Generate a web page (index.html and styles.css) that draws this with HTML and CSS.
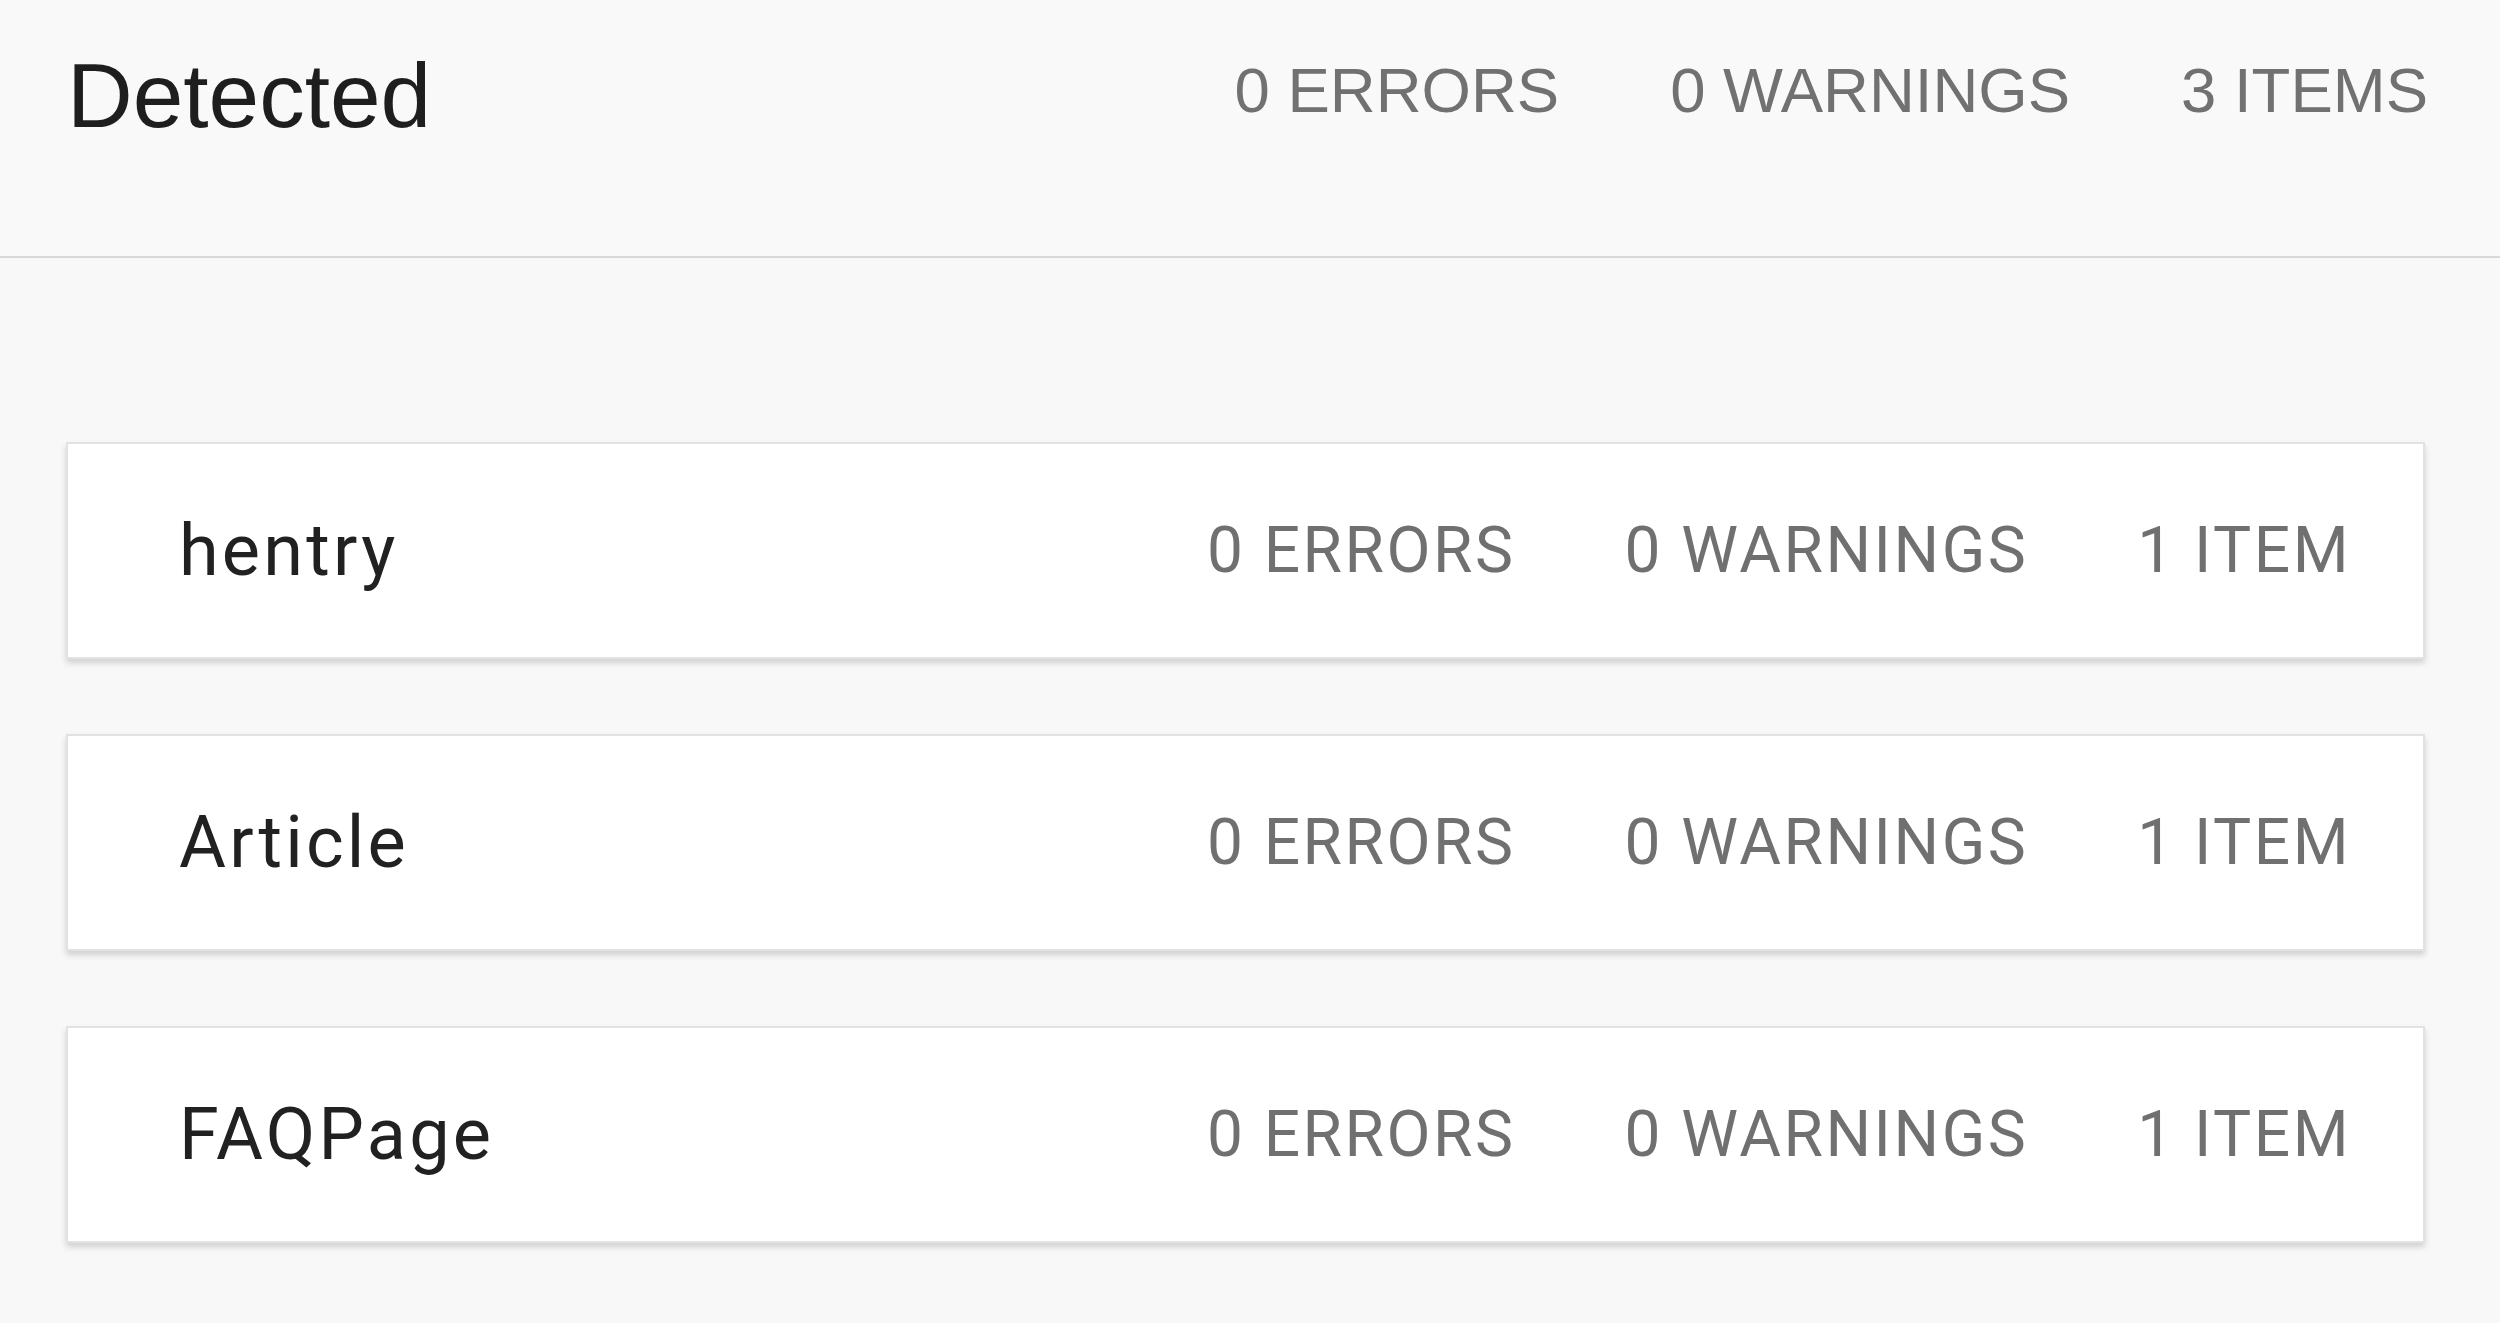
FILE: index.html
```html
<!DOCTYPE html>
<html>
<head>
<meta charset="utf-8">
<link rel="stylesheet" href="styles.css">
</head>
<body>
<header class="header">
  <h1 class="title">Detected</h1>
  <div class="summary">
    <span class="summary-item">0 ERRORS</span>
    <span class="summary-item">0 WARNINGS</span>
    <span class="summary-item">3 ITEMS</span>
  </div>
</header>
<main class="list">
  <div class="card">
    <span class="card-name">hentry</span>
    <div class="card-stats">
      <span class="stat">0 ERRORS</span>
      <span class="stat">0 WARNINGS</span>
      <span class="stat">1 ITEM</span>
    </div>
  </div>
  <div class="card">
    <span class="card-name">Article</span>
    <div class="card-stats">
      <span class="stat">0 ERRORS</span>
      <span class="stat">0 WARNINGS</span>
      <span class="stat">1 ITEM</span>
    </div>
  </div>
  <div class="card">
    <span class="card-name">FAQPage</span>
    <div class="card-stats">
      <span class="stat">0 ERRORS</span>
      <span class="stat">0 WARNINGS</span>
      <span class="stat">1 ITEM</span>
    </div>
  </div>
</main>
</body>
</html>
```
FILE: styles.css
```css
html, body {
  margin: 0;
  padding: 0;
  background: #f8f8f8;
}

body {
  font-family: "Liberation Sans", Arial, sans-serif;
  width: 2500px;
  height: 1323px;
  overflow: hidden;
}

.header {
  display: flex;
  justify-content: space-between;
  align-items: flex-start;
  height: 206px;
  padding: 50px 72px 0 67px;
  border-bottom: 2px solid #d8d8d8;
  background: #f9f9f9;
}

.title {
  margin: 0;
  font-size: 91px;
  line-height: 1;
  font-weight: 400;
  color: #1e1e1e;
}

.summary {
  display: flex;
  gap: 111px;
  margin-top: 9px;
}

.summary-item {
  font-size: 63.5px;
  line-height: 1;
  color: #717171;
}

.list {
  display: flex;
  flex-direction: column;
  gap: 75px;
  padding: 184px 75px 0 66px;
}

.card {
  display: flex;
  align-items: center;
  justify-content: space-between;
  box-sizing: border-box;
  height: 217px;
  padding: 0 72px 0 111px;
  background: #ffffff;
  border: 2px solid #e2e2e2;
  box-shadow: 0 4px 6px rgba(0, 0, 0, 0.16);
  font-family: Roboto, "Liberation Sans", sans-serif;
}

.card-name {
  font-size: 72px;
  letter-spacing: 3.2px;
  color: #212121;
}

.card-stats {
  display: flex;
  gap: 109px;
}

.stat {
  font-size: 64px;
  letter-spacing: 2.5px;
  color: #707070;
}
```
